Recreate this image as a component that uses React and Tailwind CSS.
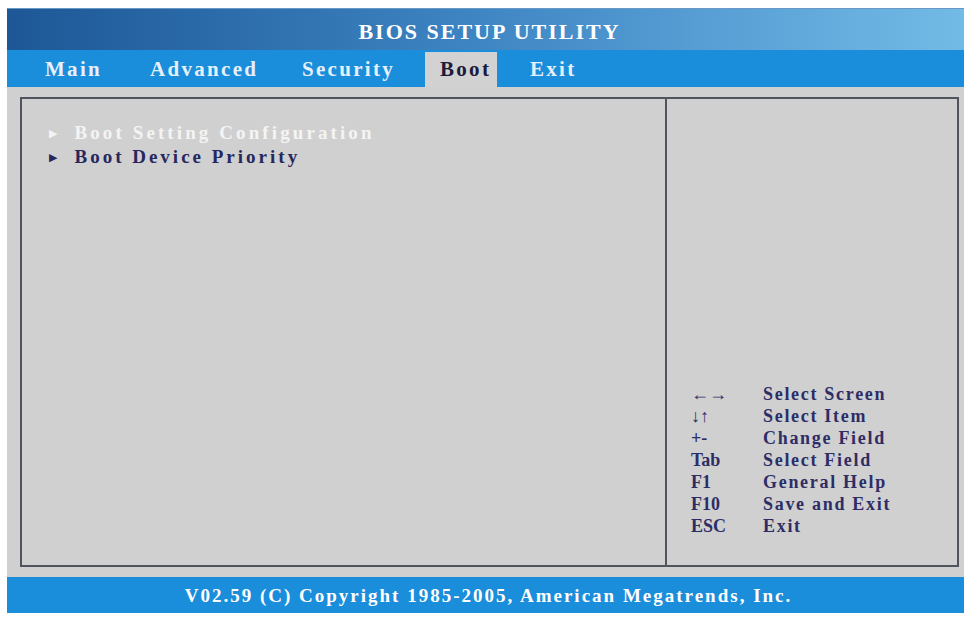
import React from "react";

const tabs = [
  { name: "Main", w: "w-[105px]" },
  { name: "Advanced", w: "w-[152px]" },
  { name: "Security", w: "w-[138px]" },
  { name: "Boot", w: "w-[72px] mr-[18px]", active: true },
  { name: "Exit", w: "" },
];

const help = [
  ["←→", "Select Screen"],
  ["↓↑", "Select Item"],
  ["+-", "Change Field"],
  ["Tab", "Select Field"],
  ["F1", "General Help"],
  ["F10", "Save and Exit"],
  ["ESC", "Exit"],
];

/* ── BIOS setup screen ── */
export default function App() {
  return (
    <div
      className="w-[970px] h-[617px] bg-white pt-[8px] pl-[7px] pr-[6px]"
      style={{ fontFamily: '"Liberation Serif", "DejaVu Serif", serif' }}
    >
      <div className="flex flex-col">
        {/* Title */}
        <div className="h-[42px] flex items-center justify-center bg-gradient-to-r from-[#1d5796] via-[#3f86c4] to-[#72bbe6] border-t border-[#6a98c4]">
          <span className="text-white text-[22px] font-bold tracking-[2px] mt-[4px] ml-[8px]">
            BIOS SETUP UTILITY
          </span>
        </div>

        {/* Tabs */}
        <div className="h-[37px] flex items-end bg-[#1a8ddb] pl-[23px]">
          {tabs.map((t) => (
            <div
              key={t.name}
              className={`${t.w} h-[35px] flex items-center pl-[15px] text-[21px] font-bold tracking-[2.3px] ${
                t.active ? "bg-[#d2d2d2] text-[#1b1b3c]" : "text-[#e6f0fa]"
              }`}
            >
              {t.name}
            </div>
          ))}
        </div>

        {/* Body */}
        <div className="h-[490px] bg-[#d0d0d0] pt-[10px] pl-[13px] pr-[5px] pb-[10px]">
          <div className="h-full flex border-2 border-[#50545e]">
            <div className="w-[645px] border-r-2 border-[#50545e] pt-[22px] pl-[27px]">
              <div className="flex items-center gap-[17px] text-[19px] font-bold tracking-[3.1px] leading-[24px] text-[#f4f4f4]">
                <span className="text-[11px] tracking-normal">▶</span>
                <span>Boot Setting Configuration</span>
              </div>
              <div className="flex items-center gap-[17px] text-[19px] font-bold tracking-[3px] leading-[24px] text-[#27275e]">
                <span className="text-[11px] tracking-normal">▶</span>
                <span>Boot Device Priority</span>
              </div>
            </div>
            <div className="flex-1 flex flex-col justify-end pb-[28px] pl-[24px]">
              {help.map(([k, v]) => (
                <div
                  key={k}
                  className="flex h-[22px] items-center text-[18px] font-bold text-[#2d2d66] tracking-[1.7px]"
                >
                  <span className="w-[72px] tracking-normal">{k}</span>
                  <span>{v}</span>
                </div>
              ))}
            </div>
          </div>
        </div>

        {/* Footer */}
        <div className="h-[36px] flex items-center justify-center bg-[#1a8ddb]">
          <span className="text-white text-[19px] font-bold tracking-[2px] mt-[3px] ml-[6px]">
            V02.59 (C) Copyright 1985-2005, American Megatrends, Inc.
          </span>
        </div>
      </div>
    </div>
  );
}
